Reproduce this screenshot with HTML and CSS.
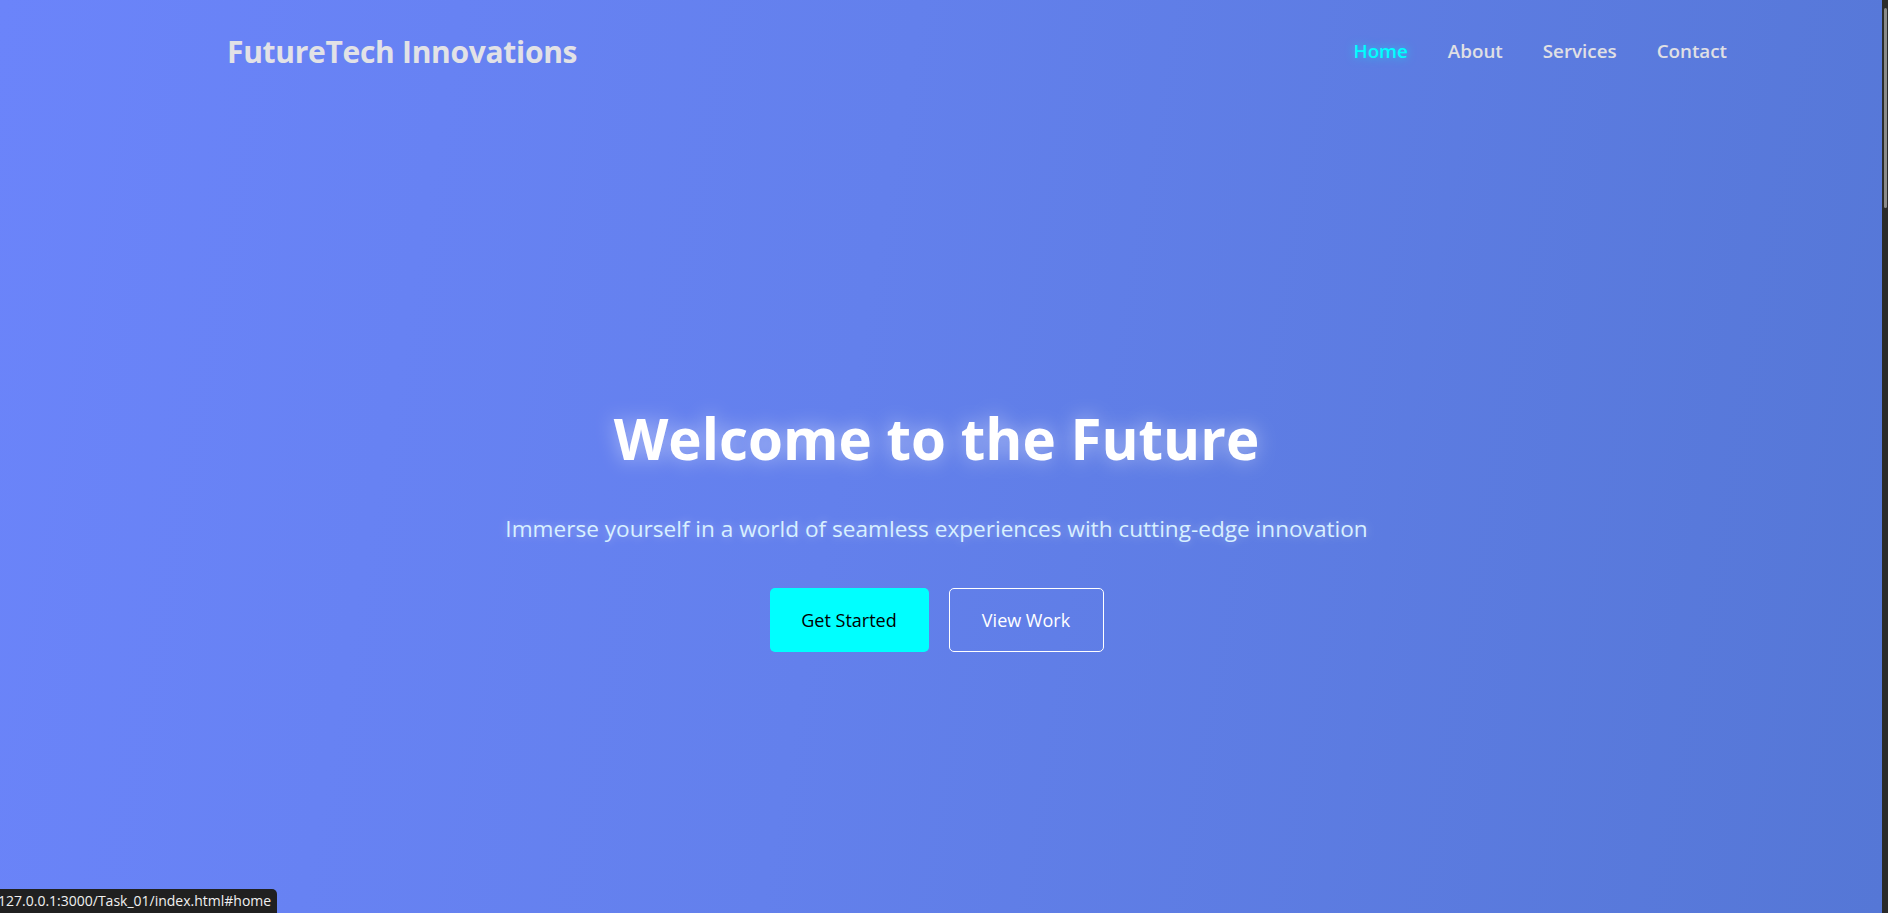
FILE: index.html
```html
<!DOCTYPE html>
<html lang="en">
<head>
<meta charset="UTF-8">
<title>FutureTech Innovations</title>
<link rel="stylesheet" href="styles.css">
</head>
<body>
<div class="page">
  <header class="site-header">
    <div class="logo">FutureTech Innovations</div>
    <nav class="nav">
      <a class="nav-link active" href="#home">Home</a>
      <a class="nav-link" href="#about">About</a>
      <a class="nav-link" href="#services">Services</a>
      <a class="nav-link" href="#contact">Contact</a>
    </nav>
  </header>
  <main class="hero" id="home">
    <h1 class="hero-title">Welcome to the Future</h1>
    <p class="hero-sub">Immerse yourself in a world of seamless experiences with cutting-edge innovation</p>
    <div class="hero-actions">
      <a class="btn btn-primary" href="#">Get Started</a>
      <a class="btn btn-outline" href="#">View Work</a>
    </div>
  </main>
</div>
<div class="scrollbar"><div class="scroll-thumb"></div></div>
<div class="status-bar">127.0.0.1:3000/Task_01/index.html#home</div>
</body>
</html>
```
FILE: styles.css
```css
* { box-sizing: border-box; }
html, body { margin: 0; padding: 0; height: 100%; overflow: hidden; }
body {
  font-family: "Open Sans", "Noto Sans", sans-serif;
  background: #5f7de8;
}
.page {
  width: 1882px;
  height: 913px;
  background: linear-gradient(100deg, #6b84fa 0%, #6380ec 45%, #5577d6 100%);
  display: flex;
  flex-direction: column;
}
.site-header {
  display: flex;
  justify-content: space-between;
  align-items: center;
  height: 102px;
  padding: 0 155px 0 227px;
}
.logo {
  color: #e2e2e6;
  font-size: 30px;
  font-weight: 700;
  letter-spacing: -0.3px;
}
.nav { display: flex; gap: 40px; }
.nav-link {
  color: #e0e0e4;
  text-decoration: none;
  font-size: 18.8px;
  font-weight: 600;
}
.nav-link.active {
  color: #00ffff;
  text-shadow: 0 0 10px rgba(0,255,255,0.6);
}
.hero {
  flex: 1;
  display: flex;
  flex-direction: column;
  align-items: center;
  padding: 303px 9px 0 0;
}
.hero-title {
  margin: 0;
  color: #ffffff;
  font-size: 56.5px;
  font-weight: 700;
  line-height: 1.2;
  text-shadow: 0 0 20px rgba(255,255,255,0.5);
}
.hero-sub {
  margin: 40px 0 0;
  color: #d8f0ff;
  font-size: 22.6px;
  text-shadow: 0 0 10px rgba(255,255,255,0.35);
}
.hero-actions {
  display: flex;
  gap: 20px;
  margin-top: 44px;
}
.btn {
  display: flex;
  align-items: center;
  justify-content: center;
  height: 64px;
  font-size: 18px;
  text-decoration: none;
  border-radius: 5px;
}
.btn-primary {
  width: 159px;
  background: #00ffff;
  color: #000;
}
.btn-outline {
  width: 155px;
  color: #fff;
  border: 1px solid #fff;
}
.scrollbar {
  position: fixed;
  top: 0;
  right: 0;
  width: 6px;
  height: 913px;
  background: #2b2b2b;
}
.scroll-thumb {
  position: absolute;
  top: 8px;
  left: 2px;
  width: 3px;
  height: 200px;
  border-radius: 2px;
  background: #8a8a8a;
}
.status-bar {
  position: fixed;
  left: -2px;
  bottom: 0;
  height: 24px;
  padding: 0 6px 0 0;
  width: 279px;
  background: #202020;
  color: #f0f0f0;
  font-size: 14px;
  line-height: 24px;
  border-top-right-radius: 5px;
  white-space: nowrap;
  overflow: hidden;
  font-family: "Open Sans", sans-serif;
}
```
